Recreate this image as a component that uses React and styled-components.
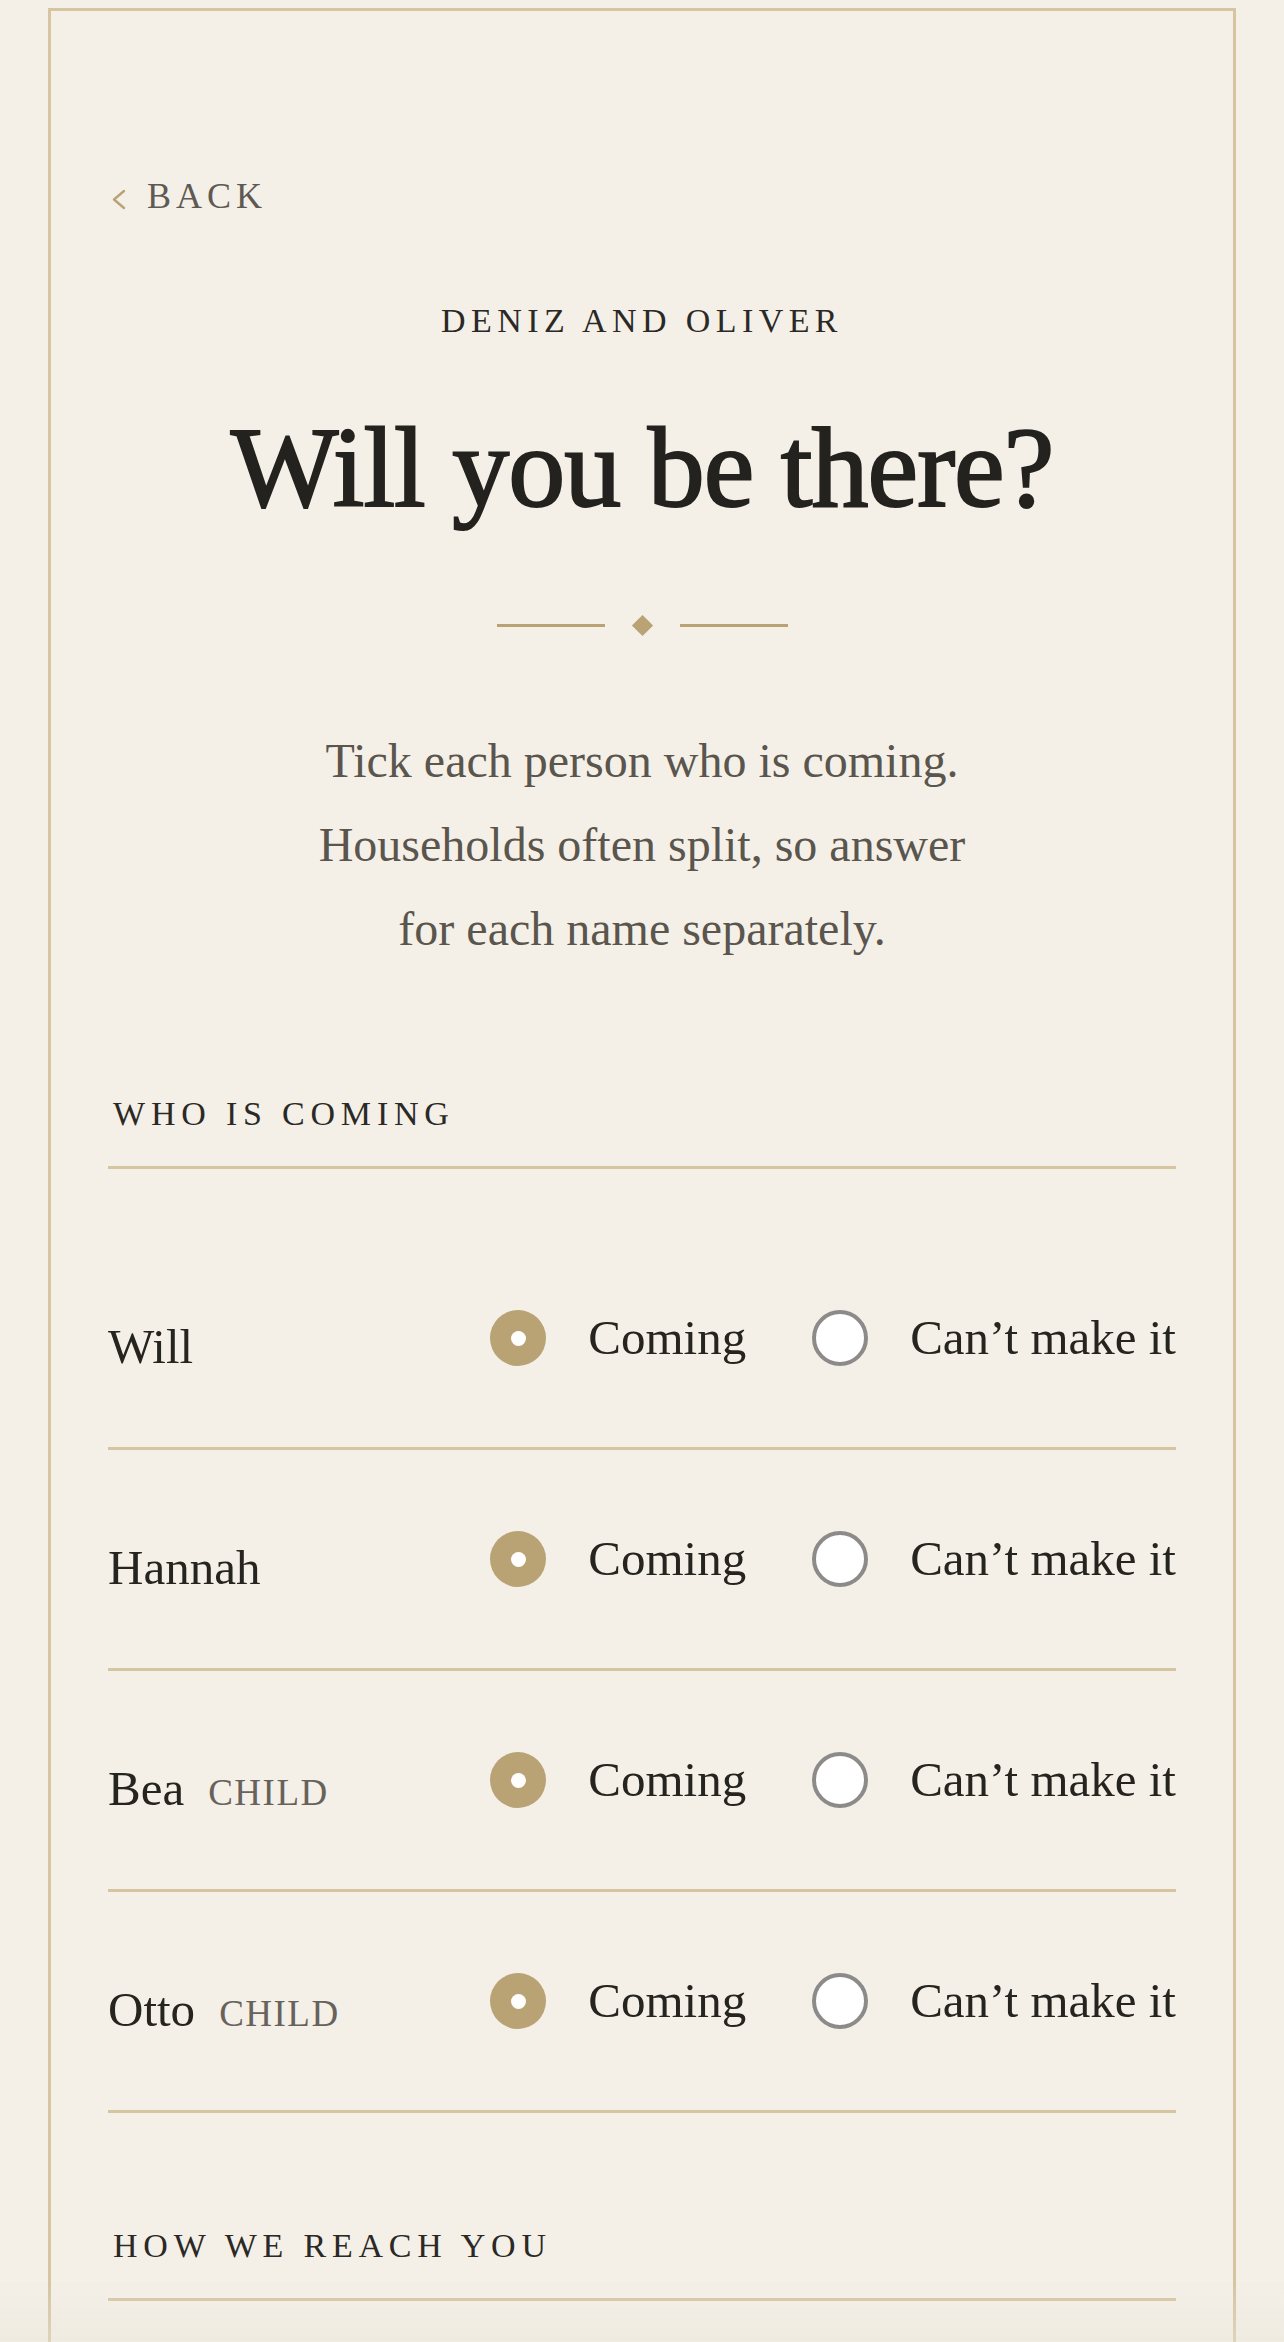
import React, { useState } from "react";
import styled, { createGlobalStyle } from "styled-components";

const GlobalStyle = createGlobalStyle`
  html, body {
    margin: 0;
    padding: 0;
    background: #f4f0e8;
  }
  body {
    font-family: "Liberation Serif", "Times New Roman", serif;
    color: #26241f;
  }
  * { box-sizing: border-box; }
`;

const Page = styled.div`
  padding: 8px 48px 0;
  min-height: 2342px;
`;

const Card = styled.main`
  border: 3px solid #d5c5a1;
  border-bottom: none;
  padding: 167px 57px 41px;
  display: flex;
  flex-direction: column;
`;

const BackLink = styled.a`
  display: inline-flex;
  align-items: center;
  align-self: flex-start;
  gap: 21px;
  height: 36px;
  padding-left: 3px;
  font-size: 36px;
  line-height: 1;
  letter-spacing: 5px;
  color: #5e5a53;
  text-decoration: none;
  cursor: pointer;
  svg { display: block; margin-top: 6px; }
`;

const Couple = styled.div`
  margin-top: 90px;
  text-align: center;
  font-size: 34px;
  line-height: 1;
  letter-spacing: 5.4px;
  text-transform: uppercase;
  color: #2b2925;
`;

const Title = styled.h1`
  margin: 73px 0 0;
  text-align: center;
  font-size: 114px;
  line-height: 1;
  font-weight: 400;
  letter-spacing: -1px;
  color: #24221e;
  -webkit-text-stroke: 2px #24221e;
`;

const Ornament = styled.div`
  margin-top: 90px;
  height: 20px;
  display: flex;
  align-items: center;
  justify-content: center;
  gap: 30px;
`;

const Rule = styled.span`
  width: 108px;
  height: 3px;
  background: #b9a274;
`;

const Diamond = styled.span`
  width: 15px;
  height: 15px;
  background: #b9a274;
  transform: rotate(45deg);
`;

const Intro = styled.p`
  margin: 84px auto 0;
  max-width: 700px;
  text-align: center;
  font-size: 48px;
  line-height: 84px;
  color: #5a554d;
`;

const SectionHead = styled.h2`
  margin: ${(p) => p.$gap}px 0 0;
  padding: 0 0 35px 5px;
  border-bottom: 3px solid #d5c5a1;
  font-size: 34px;
  line-height: 1;
  font-weight: 400;
  letter-spacing: 5.8px;
  text-transform: uppercase;
  color: #2b2925;
`;

const GuestList = styled.ul`
  list-style: none;
  margin: 0;
  padding: 60px 0 0;
`;

const GuestRow = styled.li`
  display: flex;
  align-items: center;
  justify-content: space-between;
  padding: 72px 0;
  border-bottom: 3px solid #d5c5a1;
`;

const NameBlock = styled.div`
  display: flex;
  align-items: baseline;
  gap: 24px;
  padding-top: 18px;
`;

const Name = styled.span`
  font-size: 49px;
  line-height: 56px;
  color: #26241f;
`;

const Tag = styled.span`
  font-size: 37px;
  letter-spacing: 1.5px;
  text-transform: uppercase;
  color: #67625b;
`;

const Choices = styled.div`
  display: flex;
  align-items: center;
  gap: 66px;
`;

const Choice = styled.label`
  display: flex;
  align-items: center;
  gap: 42px;
  font-size: 49px;
  line-height: 56px;
  color: #26241f;
  cursor: pointer;
`;

const RadioDot = styled.span`
  position: relative;
  width: 56px;
  height: 56px;
  border-radius: 50%;
  flex-shrink: 0;
  background: ${(p) => (p.$on ? "#b9a274" : "#ffffff")};
  border: ${(p) => (p.$on ? "none" : "4px solid #8c8b89")};
  &::after {
    content: "";
    position: absolute;
    left: 50%;
    top: 50%;
    width: 15px;
    height: 15px;
    margin: -7.5px 0 0 -7.5px;
    border-radius: 50%;
    background: #ffffff;
    display: ${(p) => (p.$on ? "block" : "none")};
  }
`;

const BottomFade = styled.div`
  position: fixed;
  left: 0;
  right: 0;
  bottom: 0;
  height: 64px;
  pointer-events: none;
  background: linear-gradient(
    to bottom,
    rgba(244, 240, 232, 0) 0%,
    rgba(234, 229, 217, 0.45) 100%
  );
`;

const guests = [
  { name: "Will" },
  { name: "Hannah" },
  { name: "Bea", child: true },
  { name: "Otto", child: true },
];

function Chevron() {
  return (
    <svg width="15" height="21" viewBox="0 0 15 21" aria-hidden="true">
      <path
        d="M13 2 L3 10.5 L13 19"
        fill="none"
        stroke="#b9a274"
        strokeWidth="2.4"
        strokeLinecap="round"
        strokeLinejoin="round"
      />
    </svg>
  );
}

export default function App() {
  const [answers, setAnswers] = useState(() =>
    Object.fromEntries(guests.map((g) => [g.name, "yes"]))
  );

  return (
    <>
      <GlobalStyle />
      <Page>
        <Card>
          <BackLink>
            <Chevron />
            <span>BACK</span>
          </BackLink>
          <Couple>Deniz and Oliver</Couple>
          <Title>Will you be there?</Title>
          <Ornament>
            <Rule />
            <Diamond />
            <Rule />
          </Ornament>
          <Intro>
            Tick each person who is coming. Households often split, so answer
            for each name separately.
          </Intro>

          <SectionHead $gap={126}>Who is coming</SectionHead>
          <GuestList>
            {guests.map((g) => (
              <GuestRow key={g.name}>
                <NameBlock>
                  <Name>{g.name}</Name>
                  {g.child && <Tag>Child</Tag>}
                </NameBlock>
                <Choices>
                  <Choice
                    onClick={() => setAnswers({ ...answers, [g.name]: "yes" })}
                  >
                    <RadioDot $on={answers[g.name] === "yes"} />
                    Coming
                  </Choice>
                  <Choice
                    onClick={() => setAnswers({ ...answers, [g.name]: "no" })}
                  >
                    <RadioDot $on={answers[g.name] === "no"} />
                    Can’t make it
                  </Choice>
                </Choices>
              </GuestRow>
            ))}
          </GuestList>

          <SectionHead $gap={116}>How we reach you</SectionHead>
        </Card>
      </Page>
      <BottomFade />
    </>
  );
}
